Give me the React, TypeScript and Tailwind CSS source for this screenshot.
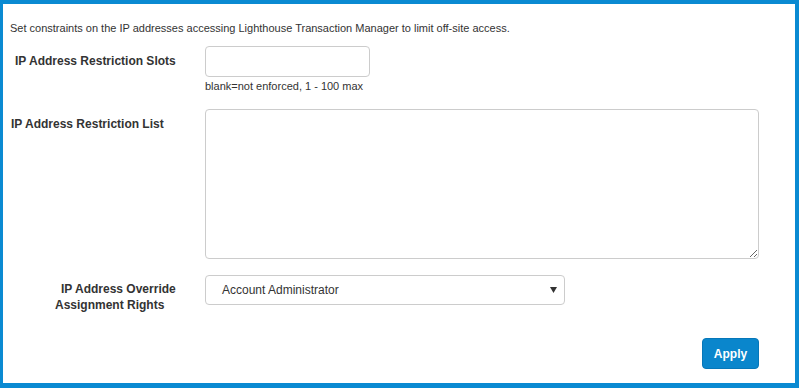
const labelCls = 'text-[12px] font-bold text-[#333] leading-4';

const App = () => {
  return (
    <div className="h-[388px] w-[799px] bg-white border-t-4 border-l-[3px] border-r-4 border-b-[5px] border-[#0a8ad2] font-['Liberation_Sans',Arial,sans-serif] text-[#333]">
      <p className="pt-[17px] pl-[7px] text-[11px] leading-[15px]">
        Set constraints on the IP addresses accessing Lighthouse Transaction Manager to limit off-site access.
      </p>

      <div className="flex mt-[10px]">
        <div className="w-[202px] pl-[12px] pt-[7px]">
          <p className={labelCls}>IP Address Restriction Slots</p>
        </div>
        <div className="flex flex-col">
          <input type="text" className="w-[165px] h-[31px] border border-[#ccc] rounded-[4px] outline-none" />
          <p className="mt-[2px] text-[11px] leading-[15px]">blank=not enforced, 1 - 100 max</p>
        </div>
      </div>

      <div className="flex mt-[15px]">
        <div className="w-[202px] pl-[8px] pt-[7px]">
          <p className={labelCls}>IP Address Restriction List</p>
        </div>
        <textarea className="w-[554px] h-[150px] border border-[#ccc] rounded-[4px] outline-none" />
      </div>

      <div className="flex mt-[16px]">
        <div className="w-[202px] pt-[6px] flex flex-col">
          <p className={`${labelCls} pl-[58px]`}>IP Address Override</p>
          <p className={`${labelCls} pl-[52px]`}>Assignment Rights</p>
        </div>
        <div className="w-[360px] h-[30px] border border-[#ccc] rounded-[4px] flex items-center justify-between pl-[16px] pr-[7px]">
          <span className="text-[12px]">Account Administrator</span>
          <svg width="7" height="6" viewBox="0 0 7 6">
            <path d="M0 0h7L3.5 6z" fill="#333" />
          </svg>
        </div>
      </div>

      <div className="flex justify-end mt-[25px] pr-[36px]">
        <button className="w-[57px] h-[31px] rounded-[4px] bg-[#0a86cc] border border-[#0677b9] text-white text-[12px] font-bold">
          Apply
        </button>
      </div>
    </div>
  );
};

export default App;
